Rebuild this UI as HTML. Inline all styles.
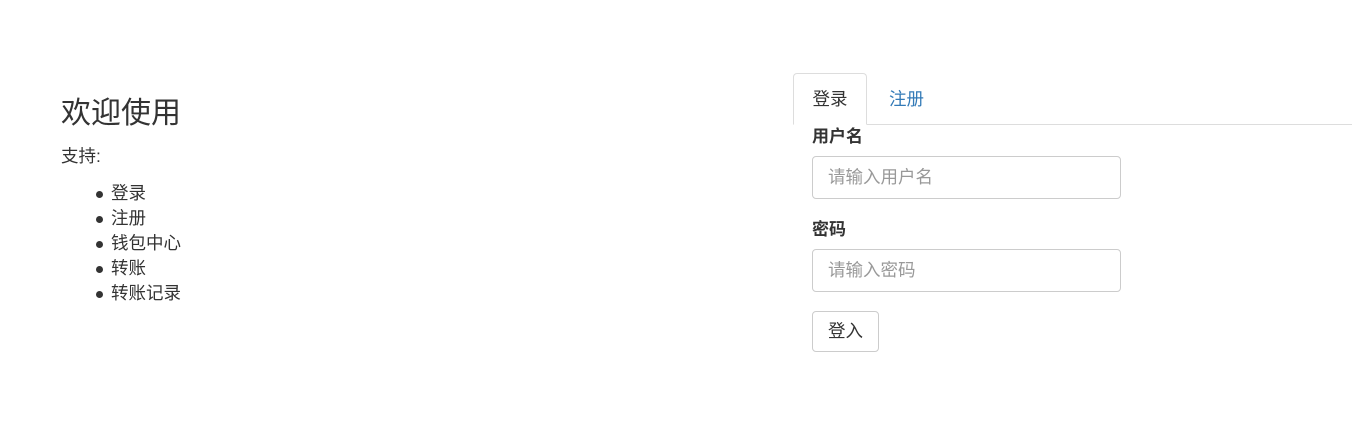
<!DOCTYPE html>
<html><head><meta charset="utf-8"><style>
body{margin:0;width:1352px;height:434px;background:#fff;font-family:"Liberation Sans","Noto Sans CJK SC",sans-serif;color:#333;position:relative;overflow:hidden}
.a{position:absolute;white-space:nowrap}
h1{position:absolute;left:61px;top:95px;margin:0;font-size:30px;font-weight:400;line-height:38px}
ul{position:absolute;left:71px;top:181px;margin:0;padding-left:40px;font-size:17.5px;line-height:25px;list-style:none}
li{position:relative}
li:before{content:"";position:absolute;left:-15px;top:10px;width:7px;height:7px;border-radius:50%;background:#333}
.tabline{position:absolute;left:793px;top:124px;width:559px;height:1px;background:#ddd}
.tab{position:absolute;left:793px;top:73px;width:74px;height:52px;border:1px solid #ddd;border-bottom:1px solid #fff;border-radius:4px 4px 0 0;background:#fff;box-sizing:border-box;font-size:17.5px;line-height:50px;text-align:center}
.inp{position:absolute;left:812px;width:309px;height:43px;border:1px solid #ccc;border-radius:4px;box-sizing:border-box;font-size:17.5px;color:#999;padding-left:15px;line-height:41px}
.lab{font-weight:bold;font-size:17px}
.btn{position:absolute;left:812px;top:311px;width:67px;height:41px;border:1px solid #ccc;border-radius:4px;box-sizing:border-box;font-size:17.5px;line-height:39px;text-align:center}
</style></head><body>
<h1>欢迎使用</h1>
<div class="a" style="left:61px;top:145px;font-size:17.5px;line-height:22px">支持:</div>
<ul><li>登录</li><li>注册</li><li>钱包中心</li><li>转账</li><li>转账记录</li></ul>
<div class="tabline"></div>
<div class="tab">登录</div>
<div class="a" style="left:889px;top:87px;font-size:17.5px;line-height:24px;color:#337ab7">注册</div>
<div class="a lab" style="left:812px;top:126px;line-height:22px">用户名</div>
<div class="inp" style="top:156px">请输入用户名</div>
<div class="a lab" style="left:812px;top:219px;line-height:22px">密码</div>
<div class="inp" style="top:249px">请输入密码</div>
<div class="btn">登入</div>
</body></html>
